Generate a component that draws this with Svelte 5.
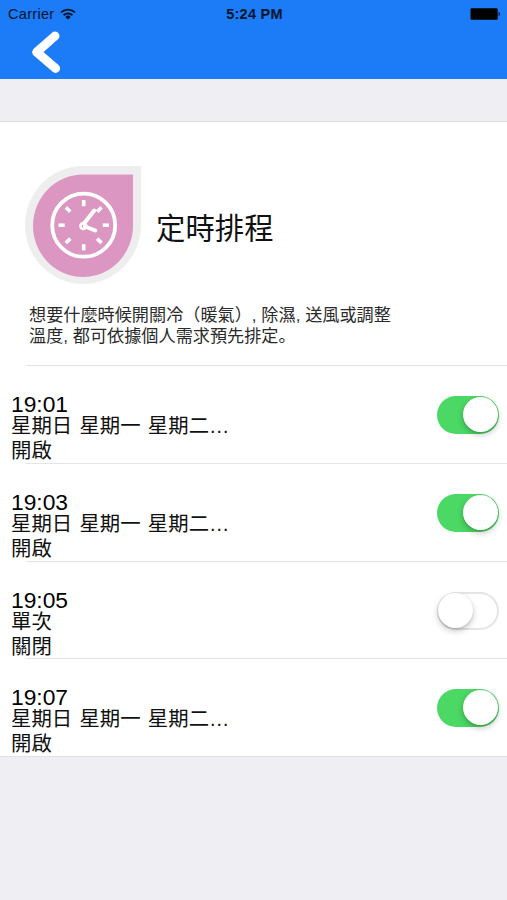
<script>
  let schedules = $state([
    { time: '19:01', days: '星期日 星期一 星期二…', on: true },
    { time: '19:03', days: '星期日 星期一 星期二…', on: true },
    { time: '19:05', days: '單次', on: false },
    { time: '19:07', days: '星期日 星期一 星期二…', on: true }
  ]);

  const ticks = [0, 45, 90, 135, 180, 225, 270, 315];
</script>

<main class="screen">
  <header>
    <div class="status-bar">
      <div class="carrier">
        <span>Carrier</span>
        <svg width="16" height="12" viewBox="0 0 16 12" fill="none" stroke="#06152b" stroke-width="1.9">
          <path d="M1 4.4a10.2 10.2 0 0 1 14 0" />
          <path d="M3.6 7.2a6.4 6.4 0 0 1 8.8 0" />
          <path d="M8 11.6 5.3 8.9a3.9 3.9 0 0 1 5.4 0z" fill="#06152b" stroke="none" />
        </svg>
      </div>
      <span class="clock">5:24 PM</span>
      <div class="battery">
        <svg width="31" height="12" viewBox="0 0 31 12">
          <rect x="0.5" y="0.3" width="27.2" height="11.4" rx="1.2" />
          <path d="M28.6 4v4c1.6-.3 1.6-3.7 0-4z" />
        </svg>
      </div>
    </div>
    <button class="back" aria-label="返回">
      <svg width="32" height="46" viewBox="0 0 32 46" fill="none" stroke="#fff" stroke-width="9" stroke-linecap="round" stroke-linejoin="round">
        <path d="M25 9 6.700 25.200 25.600 41.400" />
      </svg>
    </button>
  </header>

  <section class="intro">
    <div class="heading">
      <svg class="logo" width="118" height="120" viewBox="0 0 118 120">
        <path d="M58 1h58v58a58 59 0 1 1-58-58z" fill="#eeeeef" />
        <path d="M58.5 9.5h49.5v51.500a50 51.250 0 1 1-49.500-51.500z" fill="#db97c1" />
        <g fill="none" stroke="#fff">
          <circle cx="58.7" cy="60.2" r="31.5" stroke-width="3.8" />
          {#each ticks as angle}
            <path d="M58.7 35v6.2" stroke-width="3.6" transform="rotate({angle} 58.7 60.2)" />
          {/each}
          <path d="M59 58.5 69.2 45.5M60 61.5 70.3 65.5" stroke-width="4" stroke-linecap="round" />
          <circle cx="58.3" cy="61" r="2.9" stroke-width="2.6" />
        </g>
      </svg>
      <h1>定時排程</h1>
    </div>
    <p>想要什麼時候開關冷（暖氣）, 除濕, 送風或調整<br />溫度, 都可依據個人需求預先排定。</p>
  </section>

  <ul>
    {#each schedules as item}
      <li>
        <div class="info">
          <span class="time">{item.time}</span>
          <span class="days">{item.days}</span>
          <span class="state">{item.on ? '開啟' : '關閉'}</span>
        </div>
        <button
          class="switch"
          class:on={item.on}
          role="switch"
          aria-checked={item.on}
          aria-label={item.time}
          onclick={() => (item.on = !item.on)}
        >
          <span class="knob"></span>
        </button>
      </li>
    {/each}
  </ul>
</main>

<style>
  :global(body) {
    background: #eeeef3;
  }

  .screen {
    min-height: 900px;
    font-family: 'Liberation Sans', 'Noto Sans CJK TC', sans-serif;
    color: #111;
  }

  header {
    height: 79px;
    background: #1c7bf7;
  }

  .status-bar {
    display: grid;
    grid-template-columns: 1fr auto 1fr;
    align-items: center;
    height: 27px;
    padding: 0 6px 0 8px;
    font-size: 14.5px;
    color: #06152b;
  }

  .carrier {
    display: flex;
    align-items: center;
    gap: 6px;
    letter-spacing: 0.3px;
  }

  .clock {
    font-size: 14.5px;
    font-weight: bold;
    letter-spacing: 0.25px;
  }

  .battery {
    display: flex;
    justify-content: flex-end;
  }

  button {
    border: none;
    padding: 0;
    cursor: pointer;
  }

  .back {
    display: block;
    margin-left: 30px;
    background: none;
  }

  .back svg {
    display: block;
  }

  .intro {
    box-sizing: border-box;
    height: 244px;
    margin-top: 42px;
    padding: 43px 0 0 25px;
    border-top: 1px solid #dedee1;
    background: #fff;
  }

  .heading {
    display: flex;
    align-items: center;
    gap: 13px;
  }

  .logo {
    flex: none;
  }

  h1 {
    margin: 8px 0 0;
    font-size: 29.4px;
    font-weight: normal;
    line-height: 40px;
  }

  p {
    margin: 20px 0 0 4px;
    font-family: 'Liberation Sans', 'Noto Sans CJK JP', sans-serif;
    font-size: 17.15px;
    line-height: 21px;
    color: #2a2a2a;
    white-space: nowrap;
  }

  ul {
    margin: 0;
    padding: 0;
    list-style: none;
    background: #fff;
    border-bottom: 1px solid #e2e2e6;
  }

  li {
    display: flex;
    justify-content: space-between;
    box-sizing: border-box;
    height: 97.8px;
    padding: 28px 8px 0 11px;
    background: linear-gradient(to right, #fff 26px, #e4e4e6 26px) top / 100% 1px no-repeat;
  }

  .info {
    display: flex;
    flex-direction: column;
  }

  .time {
    font-size: 22.8px;
    line-height: 23px;
    color: #000;
  }

  .days {
    font-size: 20.4px;
    line-height: 20px;
    word-spacing: 1.6px;
  }

  .state {
    margin-top: 2px;
    font-size: 20.4px;
    line-height: 26px;
  }

  .switch {
    box-sizing: border-box;
    width: 62px;
    height: 38px;
    margin-top: 3px;
    padding: 1px;
    border-radius: 19px;
    background: #fff;
    box-shadow: inset 0 0 0 2px #e5e5e5;
    display: flex;
  }

  .switch.on {
    justify-content: flex-end;
    background: #4bd864;
    box-shadow: none;
  }

  .knob {
    width: 35px;
    height: 35px;
    border-radius: 50%;
    background: #fff;
    box-shadow: 0 3px 6px rgba(0, 0, 0, 0.22), 0 1px 2px rgba(0, 0, 0, 0.12);
  }
</style>
